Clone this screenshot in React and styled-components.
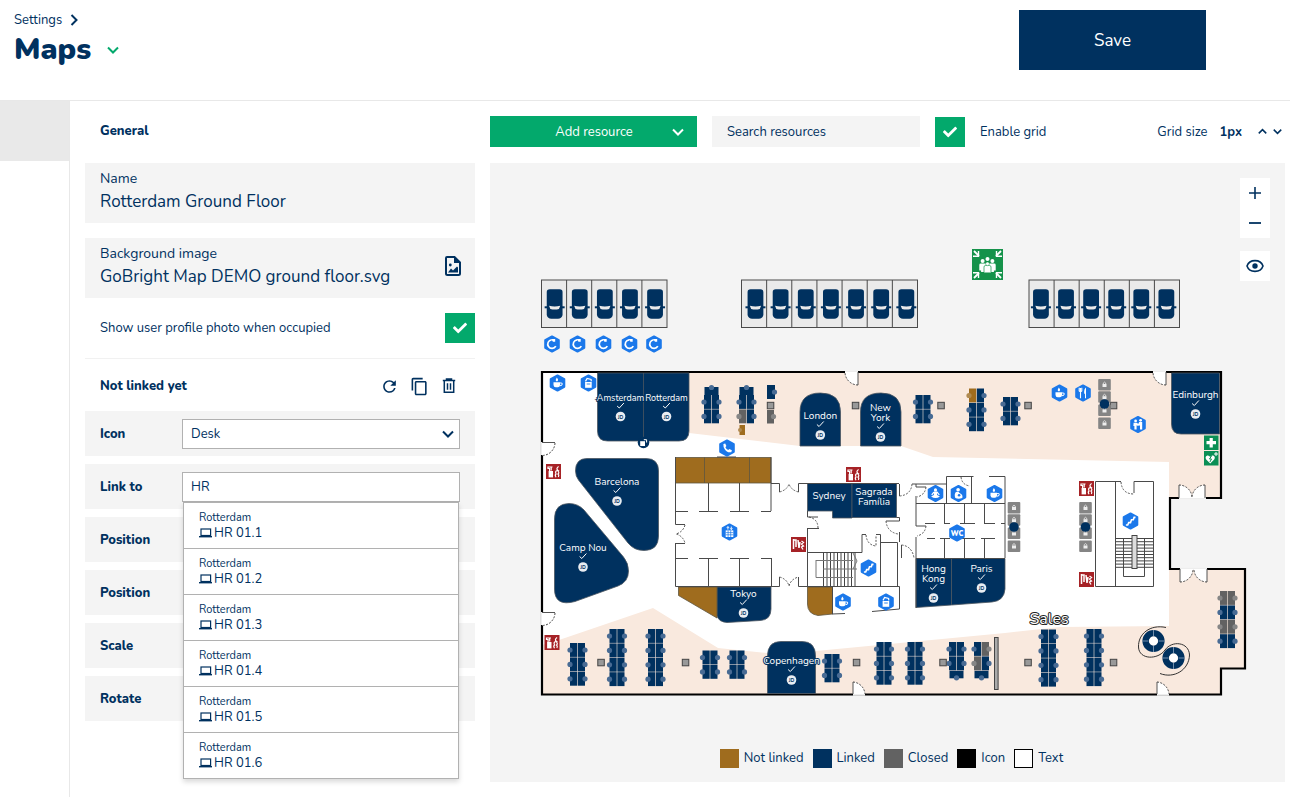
import React from "react";
import styled, { createGlobalStyle } from "styled-components";
import { FaCheck } from "react-icons/fa";
import { MdRefresh, MdContentCopy } from "react-icons/md";

const navy = "#00315f";
const green = "#03a96c";
const brown = "#9f6c1e";
const closed = "#626262";
const panel = "#f4f4f4";
const line = "#e8e8e8";
const blue = "#1b78ea";
const peach = "#f9e9de";

const GlobalStyle = createGlobalStyle`
    *, *::before {
        box-sizing: border-box;
    }

    body {
        margin: 0;
        color: ${navy};
        background: #fff;
        font-family: Nunito, Lato, sans-serif;
        font-size: 13px;
    }

    button, input, select {
        font: inherit;
        color: inherit;
    }
`;

/* ---------- page ---------- */

const Page = styled.div`
    min-height: 100vh;
    display: flex;
    flex-direction: column;
`;

const Header = styled.header`
    display: flex;
    justify-content: space-between;
    align-items: flex-start;
    min-height: 101px;
    padding: 10px 84px 0 14px;
    border-bottom: 1px solid ${line};
`;

const Breadcrumb = styled.a`
    display: flex;
    align-items: center;
    gap: 6px;
    height: 20px;
    color: ${navy};
    text-decoration: none;
`;

const TitleRow = styled.div`
    display: flex;
    align-items: center;
    gap: 16px;
`;

const Title = styled.h1`
    margin: 0;
    font-size: 30px;
    line-height: 40px;
    font-weight: 900;
`;

const PlainButton = styled.button`
    display: grid;
    place-items: center;
    padding: 0;
    border: 0;
    background: none;
    color: ${(props) => props.$color || navy};
    cursor: pointer;
`;

const SaveButton = styled.button`
    width: 187px;
    height: 60px;
    border: 0;
    color: #fff;
    background: ${navy};
    font-size: 17px;
    cursor: pointer;
`;

const Body = styled.div`
    flex: 1;
    display: flex;
`;

const Sidebar = styled.nav`
    flex: 0 0 70px;
    border-right: 1px solid ${line};
`;

const SidebarItem = styled.div`
    height: 60px;
    background: #e9e9e9;
`;

const Content = styled.main`
    flex: 1;
    min-width: 0;
    display: grid;
    grid-template-columns: 390px minmax(0, 1fr);
    gap: 15px;
    align-items: start;
    padding: 15px 5px 15px 15px;
`;

/* ---------- left column ---------- */

const SectionHead = styled.div`
    display: flex;
    align-items: center;
    justify-content: space-between;
    height: 30px;
    padding: 0 16px 0 15px;
`;

const SectionTitle = styled.h2`
    margin: 0;
    font-size: 13px;
    font-weight: 800;
`;

const IconActions = styled.div`
    display: flex;
    align-items: center;
    gap: 10px;

    button {
        width: 20px;
        height: 20px;
    }
`;

const Fields = styled.div`
    display: flex;
    flex-direction: column;
    gap: 15px;
    margin-top: 17px;
    padding-bottom: 15px;
    margin-bottom: 12px;
    border-bottom: 1px solid #f1f1f1;
`;

const Field = styled.div`
    display: flex;
    align-items: center;
    height: 60px;
    padding: 0 13px 4px 15px;
    background: ${panel};
`;

const FieldText = styled.div`
    flex: 1;
    display: flex;
    flex-direction: column;

    label {
        line-height: 20px;
        font-size: 14px;
    }

    input {
        width: 100%;
        height: 24px;
        padding: 0;
        border: 0;
        background: none;
        font-size: 17px;
    }
`;

const CheckRow = styled.div`
    display: flex;
    align-items: center;
    justify-content: space-between;
    padding-left: 15px;
`;

const CheckBoxBox = styled.span`
    display: grid;
    width: 30px;
    height: 30px;
    place-items: center;
    background: ${green};

    input, svg {
        grid-area: 1 / 1;
    }

    input {
        width: 30px;
        height: 30px;
        margin: 0;
        appearance: none;
        cursor: pointer;
    }

    svg {
        color: #fff;
        pointer-events: none;
    }
`;

const Rows = styled.div`
    display: flex;
    flex-direction: column;
    gap: 8px;
    margin-top: 10px;
`;

const Row = styled.div`
    display: flex;
    align-items: center;
    height: 45px;
    padding: 0 15px;
    background: ${panel};
`;

const RowLabel = styled.label`
    flex: 0 0 82px;
    font-weight: 800;
`;

const Control = styled.div`
    position: relative;
    flex: 1;
    display: grid;
    align-items: center;

    > input, > select, > svg {
        grid-area: 1 / 1;
    }

    > input, > select {
        width: 100%;
        height: 30px;
        padding: 0 8px;
        border: 1px solid #b1b1b1;
        border-radius: 0;
        outline: 0;
        appearance: none;
        background: #fff;
    }

    > svg {
        justify-self: end;
        margin-right: 6px;
        pointer-events: none;
    }
`;

const Results = styled.ul`
    position: absolute;
    top: 100%;
    left: 1px;
    right: 1px;
    z-index: 2;
    margin: 0;
    padding: 0;
    list-style: none;
    border: 1px solid #b1b1b1;
    background: #fff;
    box-shadow: 0 3px 5px rgba(0, 0, 0, 0.15);
`;

const Result = styled.li`
    & + & {
        border-top: 1px solid #b1b1b1;
    }

    button {
        display: block;
        width: 100%;
        height: 45px;
        padding: 0 15px;
        border: 0;
        background: none;
        text-align: left;
        cursor: pointer;
    }
`;

const Place = styled.span`
    display: block;
    font-size: 11px;
    line-height: 15px;
`;

const Desk = styled.span`
    display: flex;
    align-items: center;
    gap: 2px;
    line-height: 16px;
`;

/* ---------- right column ---------- */

const Toolbar = styled.div`
    display: flex;
    align-items: center;
    gap: 15px;
    height: 31px;
    margin-bottom: 16px;
`;

const AddButton = styled.button`
    flex: 0 0 207px;
    display: grid;
    grid-template-columns: 1fr 12px;
    align-items: center;
    height: 31px;
    padding: 0 13px 0 26px;
    border: 0;
    color: #fff;
    background: ${green};
    cursor: pointer;
`;

const Search = styled.input`
    flex: 0 0 208px;
    height: 31px;
    padding: 0 15px;
    border: 0;
    background: ${panel};

    &::placeholder {
        color: ${navy};
        opacity: 1;
    }
`;

const GridSize = styled.div`
    display: flex;
    align-items: center;
    gap: 12px;
    margin-left: auto;
    padding-right: 2px;
`;

const Steppers = styled.div`
    display: flex;
    gap: 4px;
    margin-left: 3px;

    button {
        width: 11px;
        height: 16px;
    }
`;

const MapArea = styled.section`
    position: relative;
    padding-bottom: 14px;
    background: ${panel};
`;

const Plan = styled.svg`
    display: block;
    width: 100%;
    height: auto;
    font-family: Nunito, Lato, sans-serif;
`;

const MapControls = styled.div`
    position: absolute;
    top: 15px;
    right: 15px;
    display: flex;
    flex-direction: column;
    gap: 13px;
`;

const ControlGroup = styled.div`
    display: flex;
    flex-direction: column;
    background: #fff;

    button {
        width: 30px;
        height: 30px;
    }
`;

const Legend = styled.ul`
    display: flex;
    justify-content: center;
    gap: 9px;
    margin: 0;
    padding: 0 0 0 8px;
    list-style: none;
`;

const LegendItem = styled.li`
    display: flex;
    align-items: center;
    gap: 5px;
    line-height: 20px;

    &::before {
        content: "";
        width: 19px;
        height: 19px;
        background: ${(props) => props.$color};
        border: 1px solid ${(props) => props.$border || props.$color};
    }
`;

/* ---------- small icons ---------- */

const Chevron = ({ dir = "down", size = 12, width = 2 }) => {
    const d = {
        down: "M1 3.5 L6 8.5 L11 3.5",
        up: "M1 8.5 L6 3.5 L11 8.5",
        right: "M3.5 1 L8.5 6 L3.5 11",
    }[dir];
    return (
        <svg width={size} height={size} viewBox="0 0 12 12" fill="none" stroke="currentColor" strokeWidth={width}>
            <path d={d} />
        </svg>
    );
};

const TrashIcon = () => (
    <svg width="14" height="16" viewBox="0 0 14 16" fill="none" stroke={navy} strokeWidth="1.5">
        <path d="M0.8 2.6 H13.2 M4.5 2 V1 H9.5 V2 M2.3 3 V14.2 H11.7 V3 M5.5 5.2 V11.8 M8.5 5.2 V11.8" />
    </svg>
);

const FileImageIcon = () => (
    <svg width="18" height="20" viewBox="0 0 18 20">
        <path d="M3 1 H10.5 L16 6.5 V17.5 Q16 19 14.5 19 H3.5 Q2 19 2 17.5 V2 Q2 1 3 1 Z" fill="none" stroke={navy} strokeWidth="2" />
        <path d="M10 1 V7 H16 Z" fill={navy} />
        <path d="M4 16.5 L7 12.5 L9 14.5 L13 10.5 L14 11.5 V16.5 Z" fill={navy} />
        <circle cx="6.3" cy="9" r="1.4" fill={navy} />
    </svg>
);

const LaptopIcon = () => (
    <svg width="13" height="10" viewBox="0 0 13 10">
        <rect x="2" y="1" width="9.6" height="6.5" fill="none" stroke={navy} strokeWidth="1.2" />
        <rect x="0" y="8" width="13" height="1.4" fill={navy} />
    </svg>
);

const EyeIcon = () => (
    <svg width="18" height="14" viewBox="0 0 18 14">
        <path d="M1 7 C3.5 -0.2 14.5 -0.2 17 7 C14.5 14.2 3.5 14.2 1 7 Z" fill="none" stroke={navy} strokeWidth="1.6" />
        <circle cx="9" cy="7" r="2.7" fill={navy} />
    </svg>
);

/* ---------- floor plan parts ---------- */

const Stalls = ({ x, width, count, shift = 0.6 }) => {
    const step = width / count;
    return (
        <g>
            <rect x={x} y="280" width={width} height="47.5" fill="#eaeaea" stroke="#4a4a4a" />
            {[...Array(count)].map((_, i) => {
                const cx = x + i * step + step / 2 + shift;
                return (
                    <g key={i}>
                        {i > 0 && <path d={`M${x + i * step} 280 V327.5`} stroke="#4a4a4a" />}
                        <path
                            d={`M${cx - 7.9} 292 q0 -2.8 3 -2.8 h9.8 q3 0 3 2.8 v23 q-1 3.8 -4.5 3.8 h-6.8 q-3.5 0 -4.5 -3.8 Z`}
                            fill={navy}
                        />
                        <path d={`M${cx - 10} 307.3 H${cx + 10}`} stroke={navy} strokeWidth="2" />
                        <path d={`M${cx - 5.6} 305.8 q5.6 1.4 11.2 0 l-1.3 3.2 q-4.3 1 -8.6 0 Z`} fill="#eaeaea" />
                    </g>
                );
            })}
        </g>
    );
};

// rows: one [left, right] colour pair per desk row
const Desks = ({ x, y, rows, top, bottom }) => (
    <g>
        {top && (
            <g>
                <rect x={x + 0.5} y={y - 8} width="14" height="8" fill={navy} />
                <circle cx={x + 7.5} cy={y - 7.5} r="2.6" fill="#486b94" />
            </g>
        )}
        {rows.map(([left, right], i) => {
            const ty = y + i * 14.4;
            return (
                <g key={i}>
                    <rect x={x} y={ty} width="7.2" height="13.9" fill={left} />
                    <rect x={x + 7.8} y={ty} width="7.2" height="13.9" fill={right} />
                    <circle cx={x} cy={ty + 7} r="2.6" fill={left === navy ? "#486b94" : left === brown ? "#b08a50" : "#868686"} />
                    <circle cx={x + 15} cy={ty + 7} r="2.6" fill={right === navy ? "#486b94" : "#868686"} />
                </g>
            );
        })}
        {bottom && (
            <g>
                <rect x={x + 0.5} y={y + rows.length * 14.4} width="14" height="7.5" fill={navy} />
                <circle cx={x + 7.5} cy={y + rows.length * 14.4 + 7} r="2.6" fill="#486b94" />
            </g>
        )}
    </g>
);

const Pillar = ({ x, y }) => (
    <rect x={x - 3.2} y={y - 3.2} width="6.5" height="6.5" fill="#999" stroke="#444" />
);

const Lockers = ({ x, y }) => (
    <g>
        {[0, 12.2, 25.5, 38.5].map((dy) => (
            <g key={dy}>
                <rect x={x - 6.3} y={y + dy} width="12.6" height="11.6" rx="1" fill="#858585" />
                <rect x={x - 2} y={y + dy + 5} width="4" height="3" fill="#eee" />
                <path d={`M${x - 1.2} ${y + dy + 5} v-1 q1.2 -1.8 2.4 0 v1`} fill="none" stroke="#eee" strokeWidth="0.8" />
            </g>
        ))}
        <circle cx={x} cy={y + 25} r="4.8" fill={navy} />
    </g>
);

const glyphs = {
    coffee: (
        <g>
            <path d="M-4 -0.8 H2.6 V2 Q2.2 4.2 0.4 4.2 H-1.8 Q-3.8 4.2 -4 2 Z" fill="#fff" />
            <path d="M2.6 0 Q5 -0.4 4.6 1.4 Q4.2 2.8 2.4 2.8" fill="none" stroke="#fff" strokeWidth="1.1" />
            <path d="M-0.7 -5.4 Q1.2 -3.6 0.4 -2.2 Q-0.7 -1.2 -1.7 -2.2 Q-2.2 -3.2 -0.7 -5.4 Z" fill="#fff" />
        </g>
    ),
    printer: (
        <g>
            <path d="M-3.4 -1 H3.2 V4.8 H-3.4 Z" fill="#fff" />
            <path d="M-3 -1.6 L-1.4 -4.6 L2.6 -3.6 L2.8 -1.6" fill="none" stroke="#fff" strokeWidth="1.2" />
            <path d="M-1.8 1 H1.8" stroke={blue} strokeWidth="0.9" />
        </g>
    ),
    phone: <path d="M-3.6 -4 l1.8 -0.6 l1.2 2.6 l-1 1.2 q1 2 2.8 2.8 l1.2 -1 l2.5 1.2 l-0.6 2 q-4.4 0.8 -6.6 -3 q-1.6 -2.6 -1.3 -5.2 Z" fill="#fff" />,
    lift: (
        <g>
            <rect x="-3.8" y="-1.6" width="7.6" height="6.6" fill="#fff" />
            <path d="M-3.8 0.6 H3.8 M-3.8 2.8 H3.8 M-1.4 -1.6 V5 M1.2 -1.6 V5" stroke={blue} strokeWidth="0.7" />
            <path d="M-1.6 -2.4 v-3 m-1.1 1.3 l1.1 -1.3 l1.1 1.3 M1.8 -5.4 v3 m-1.1 -1.3 l1.1 1.3 l1.1 -1.3" fill="none" stroke="#fff" strokeWidth="0.9" />
        </g>
    ),
    food: (
        <g>
            <path d="M-3.8 -5.2 v3 q1.3 1.6 2.6 0 v-3 M-2.5 -5 v10.2" fill="none" stroke="#fff" strokeWidth="1.1" />
            <path d="M3 5.2 V-5.4 Q0.8 -4 1.2 0.8 H2 V5.2 Z" fill="#fff" />
        </g>
    ),
    meeting: (
        <g fill="#fff">
            <circle cx="-2.4" cy="-3.6" r="1.4" />
            <circle cx="2.6" cy="-4.2" r="1.4" />
            <path d="M-4.4 -1.8 H-1.2 L0.2 -0.4 L1.2 -2.4 H4.2 V5 H2 V1 L-0.6 1.2 L-1.4 0.8 V5 H-3.6 V1.4 H-4.6 Z" />
        </g>
    ),
    yoga: (
        <g>
            <circle cy="-3.6" r="1.6" fill="#fff" />
            <path d="M-1.6 -1.4 H1.6 L3.8 1.4 M-1.6 -1.4 L-3.8 1.4" fill="none" stroke="#fff" strokeWidth="1.2" />
            <path d="M-1.6 -1.6 H1.6 V1.6 L4.4 3 Q0 6 -4.4 3 L-1.6 1.6 Z" fill="#fff" />
        </g>
    ),
    baby: (
        <g>
            <circle cx="-0.4" cy="-3.8" r="1.8" fill="#fff" />
            <path d="M-2.6 -1.4 Q0 -2.6 1 -0.6 Q4.8 1 3.8 4.6 Q0 6 -3.2 4.6 Q-4.6 1 -2.6 -1.4 Z" fill="#fff" />
            <circle cx="0.6" cy="1.8" r="1.3" fill={blue} />
        </g>
    ),
    stairs: <path d="M-4.6 4 h1.8 l1 -2.4 h1.8 l1 -2.8 h1.8 l0.8 -2.4 h1.4" fill="none" stroke="#fff" strokeWidth="1.6" />,
    charge: (
        <g>
            <path d="M-0.4 -4.2 A4.3 4.3 0 1 0 3.8 2.2" fill="none" stroke="#fff" strokeWidth="1.7" />
            <path d="M-1 -5 H3.2 V-2.2 H1 Z" fill="#fff" />
        </g>
    ),
    wc: <text y="3" textAnchor="middle" fontSize="7" fontWeight="900" fill="#fff">WC</text>,
};

const Hex = ({ x, y, icon }) => (
    <g transform={`translate(${x} ${y})`}>
        <path d="M0 -7.6 L6.8 -3.8 V3.8 L0 7.6 L-6.8 3.8 V-3.8 Z" fill={blue} stroke={blue} strokeWidth="2" strokeLinejoin="round" />
        {glyphs[icon]}
    </g>
);

const FireSign = ({ x, y, hose }) => (
    <g transform={`translate(${x} ${y})`}>
        <rect width="15" height="15" fill="#a62226" />
        {hose ? (
            <g>
                <path d="M2.5 2 V12 M2.5 3 H5 V10 M7 3 L8 11 L9 5" fill="none" stroke="#fff" strokeWidth="1.5" />
                <path d="M10.5 4 l2 1.5 l-2 1.5 l2 2 l-2 1 l1.5 2.5" fill="none" stroke="#fff" strokeWidth="1.3" />
            </g>
        ) : (
            <g>
                <rect x="2.6" y="7" width="4.4" height="6.4" fill="#fff" />
                <path d="M3.6 7 V4.5 H2 V3 H6.5 M5.2 3 V6.5" fill="none" stroke="#fff" strokeWidth="1.2" />
                <path d="M12.6 2.5 q-3 2 -0.6 4 q-3.4 0 -2 3.5 q-1.4 1 0 3.2 M12 7 q1.6 2 0 3 q1.4 1 0.4 3" fill="none" stroke="#fff" strokeWidth="1.2" />
            </g>
        )}
    </g>
);

const AssemblySign = () => (
    <g>
        <rect x="972" y="249" width="31" height="31" fill="#15924a" />
        <path
            d="M974 251 l5 5 M1001 251 l-5 5 M974 278 l5 -5 M1001 278 l-5 -5"
            stroke="#fff" strokeWidth="1.8"
        />
        <path
            d="M978.5 251 v5.3 h-5.5 M996.5 251 v5.3 h5.5 M978.5 278 v-5.3 h-5.5 M996.5 278 v-5.3 h5.5"
            fill="none" stroke="#fff" strokeWidth="1.4"
        />
        <g fill="#fff">
            <circle cx="982.6" cy="261" r="2" />
            <circle cx="992.4" cy="261" r="2" />
            <circle cx="987.5" cy="259" r="2" />
            <path d="M979.3 265 q0 -1.4 1.4 -1.4 h13.6 q1.4 0 1.4 1.4 v5.4 h-1.8 v1.5 h-12.8 v-1.5 h-1.8 Z" />
        </g>
        <path d="M984 272.5 v-5.5 q0 -1.5 1.5 -1.5 h4 q1.5 0 1.5 1.5 v5.5" fill="#fff" stroke="#15924a" strokeWidth="0.7" />
        <circle cx="987.5" cy="263.8" r="1.9" fill="#fff" stroke="#15924a" strokeWidth="0.5" />
    </g>
);

const Room = ({ x, y, lines, size = 10, plain }) => {
    const end = y + (lines.length - 1) * 10;
    return (
        <g>
            <text y={y + 3.5} fontSize={size} fill="#fff" stroke={navy} strokeWidth="2" paintOrder="stroke" textAnchor="middle">
                {lines.map((text, i) => <tspan key={text} x={x} dy={i ? 10 : 0}>{text}</tspan>)}
            </text>
            {!plain && (
                <g>
                    <path d={`M${x - 3.4} ${end + 9} l2.2 2 l4.6 -5`} fill="none" stroke="#fff" />
                    <circle cx={x} cy={end + 19.5} r="4.8" fill="#e9edf2" />
                    <text x={x} y={end + 21.5} fontSize="5" fontWeight="700" textAnchor="middle" fill={navy}>JD</text>
                </g>
            )}
        </g>
    );
};

// quarter circle door, the leaf stands on (x, y) and swings over to (x + w, y + h)
const Door = ({ x, y, w, h }) => (
    <g>
        <path d={`M${x} ${y} V${y + h} A13 13 0 0 ${w * h > 0 ? 0 : 1} ${x + w} ${y} Z`} fill="#fff" />
        <path d={`M${x} ${y} V${y + h}`} stroke="#555" />
        <path
            d={`M${x} ${y + h} A13 13 0 0 ${w * h > 0 ? 0 : 1} ${x + w} ${y}`}
            fill="none" stroke="#444" strokeDasharray="2 1.4"
        />
    </g>
);

const n = [navy, navy];
const grey = [closed, closed];

const deskGroups = [
    { x: 704, y: 395, rows: [n, n], top: true },
    { x: 739, y: 395, rows: [n, [closed, navy]], top: true },
    { x: 915.5, y: 395, rows: [n, n] },
    { x: 969, y: 388.5, rows: [[brown, navy], n, n] },
    { x: 1003, y: 397, rows: [n, n] },
    { x: 570, y: 643, rows: [n, n, n] },
    { x: 609.5, y: 629, rows: [n, n, n, n] },
    { x: 648, y: 629, rows: [n, n, n, n] },
    { x: 702.5, y: 650.5, rows: [n, n] },
    { x: 729.5, y: 650.5, rows: [n, n] },
    { x: 824.5, y: 654, rows: [n, n] },
    { x: 876.5, y: 642, rows: [n, n, n] },
    { x: 907.5, y: 642, rows: [n, n, n] },
    { x: 949, y: 642, rows: [n, n], bottom: true },
    { x: 974, y: 642, rows: [[navy, closed], [closed, navy]], bottom: true },
    { x: 1041, y: 629.5, rows: [n, n, n, n] },
    { x: 1086.5, y: 629, rows: [n, n, n, n] },
    { x: 1220, y: 591, rows: [grey, n, grey, n] },
];

const pillars = [
    [770.5, 405.5], [855.5, 405.5], [941, 405.5], [1028, 405.5], [1113.5, 405.5],
    [601, 662.5], [685.5, 662.5], [856.5, 662.5], [943, 662.5], [1028, 662.5], [1113.5, 662.5],
];

const hexes = [
    [552, 344, "charge"], [577.5, 344, "charge"], [603.5, 344, "charge"], [629.5, 344, "charge"], [654, 344, "charge"],
    [557.5, 383, "coffee"], [588.5, 383, "printer"], [727, 448, "phone"], [729.5, 532, "lift"],
    [1059.5, 393, "coffee"], [1083, 393, "food"], [1138, 424.5, "meeting"],
    [935.5, 493.5, "yoga"], [958.5, 493.5, "baby"], [994.5, 493.5, "coffee"], [957, 533, "wc"],
    [868.5, 568, "stairs"], [843, 602, "coffee"], [886, 602, "printer"], [1130.5, 521, "stairs"],
];

const rooms = [
    [617, 481.5, ["Barcelona"]],
    [583, 547.5, ["Camp Nou"]],
    [820.3, 415.5, ["London"]],
    [880.5, 407.5, ["New", "York"]],
    [1195.5, 394.5, ["Edinburgh"]],
    [743.5, 593.5, ["Tokyo"]],
    [791.5, 660.5, ["Copenhagen"]],
    [933.5, 568.5, ["Hong", "Kong"]],
    [981.5, 568.5, ["Paris"]],
];

const stairSteps = (x1, x2, y1, y2, step) => {
    let d = "";
    for (let y = y1; y <= y2; y += step) {
        d += `M${x1} ${y} H${x2} `;
    }
    return d;
};

const FloorPlan = () => (
    <Plan viewBox="490 163 795 585" role="img" aria-label="Rotterdam Ground Floor">
        <Stalls x={541.5} width={125.5} count={5} />
        <Stalls x={741.5} width={176} count={7} shift={1.4} />
        <Stalls x={1029} width={150.5} count={6} shift={-0.6} />
        <AssemblySign />

        <path d="M542 372 H1221 V498 H1170 V569 H1245 V668.5 H1221 V694.5 H542 Z" fill="#fff" />
        <path d="M689 372 H1221 V498 H1169 V462 L933 457 L901 446 H800 L689 433 Z" fill={peach} />
        <path d="M542 645 L559 640 L653 608 L718 648 L767 653 L816 651 L1005 633 L1060 627 L1169 626 V569 H1245 V668.5 H1221 V694.5 H542 Z" fill={peach} />
        <path d="M542 372 H1221 V498 H1170 V569 H1245 V668.5 H1221 V694.5 H542 Z" fill="none" stroke="#000" strokeWidth="2.2" />

        {/* openings in the outer wall */}
        <path d="M845 372 H858 M1153 372 H1166 M542 442 V455 M542 612 V625 M853 694.5 H865 M1157 694.5 H1169 M1179 498 H1206 M1180 569 H1207" stroke="#ededed" strokeWidth="2.4" />
        <Door x={858} y={372} w={-13} h={13} />
        <Door x={1166} y={372} w={-13} h={13} />
        <path d="M542 442.5 H555 A13 13 0 0 1 542 455.5 M542 612.5 H555 A13 13 0 0 1 542 625.5" fill="#fff" stroke="#444" strokeDasharray="2 1.4" />
        <path d="M542 442.5 H555 M542 612.5 H555" stroke="#555" />
        <Door x={853} y={694} w={12} h={-12} />
        <Door x={1157} y={694} w={12} h={-12} />
        <Door x={1179} y={498} w={13} h={-13} />
        <Door x={1205} y={498} w={-13} h={-13} />
        <Door x={1180} y={569} w={13} h={13} />
        <Door x={1207} y={569} w={-13} h={13} />

        {/* rooms */}
        <g fill={navy} stroke="#4b5560" strokeWidth="0.8">
            <path d="M597.5 373 H689 V431 Q689 441 679 441 H607.5 Q597.5 441 597.5 431 Z" />
            <path d="M643.5 373 V437" />
            <path d="M587 458.5 H646 Q658.5 458.5 658.5 471 V536 Q658.5 550.5 644 550.5 Q634 550.5 628 543 L578.5 480 Q575.5 476 575.5 471 Q575.5 458.5 587 458.5 Z" />
            <path d="M569 503.5 Q578 503.5 584 510 L623.5 557 Q628.5 563 628.5 571 Q628.5 582 618 586 L575 601.5 Q554.5 607 554.5 589 V519 Q554.5 503.5 569 503.5 Z" />
            <path d="M800 446 V412 Q800 393 820.5 393 Q840.5 393 840.5 412 V446 Z" />
            <path d="M860.5 446 V412 Q860.5 393 881 393 Q901 393 901 412 V446 Z" />
            <path d="M1171.5 373 H1219.5 V434 H1181 Q1171.5 434 1171.5 424 Z" />
            <path d="M807.5 483.5 H852 V518 H832.5 V511 H807.5 Z" />
            <path d="M852 483.5 H896.5 V517.5 H852 Z" />
            <path d="M717 587 H771 V609 Q771 620 760 620.5 L727 622.5 Q719 622 717 616 Z" />
            <path d="M767.5 693.5 V656 Q767.5 641.5 781 641.5 H802 Q815.5 641.5 815.5 656 V693.5 Z" />
            <path d="M916 558.5 H951.5 V605 L916 607.5 Z" />
            <path d="M951.5 558.5 H1005 V589 Q1004 601 992 602 L951.5 605 Z" />
        </g>
        <g fill={brown} stroke="#5e5540" strokeWidth="0.8">
            <path d="M675.5 457.5 H771 V483 H675.5 Z M704.5 457.5 V483 M749.5 457.5 V483" />
            <path d="M678.5 587 H717 V618 L678.5 595.5 Z" />
            <path d="M807.5 587 H832.5 V614 L818 615.5 Q807.5 614 807.5 604 Z" />
        </g>

        {/* inner walls */}
        <g fill="none" stroke="#4a4a4a">
            <path d="M675.5 457 V524.5 H685 M675.5 543.5 H685 M675.5 543 V586.5 H779.5 M717 457 H736" />
            <path d="M771 457 V511 M708.5 483 V511 M739.5 483 V511 M675 511.5 H688 M699 511.5 H718 M730 511.5 H749 M761 511.5 H771" />
            <path d="M708.5 558 V586 M739.5 558 V586 M771.5 558 V586 M675 558.5 H688 M699 558.5 H718 M730 558.5 H749 M761 558.5 H771" />
            <path d="M771 483.5 H779.5 V492 M798.5 492 V483.5 H899 M779.5 586.5 V577 M798.5 577 V586.5 H899.5 V609 L872 611.5 M845 613.5 L832 614" />
            <path d="M807.5 511 V517 H818 M807.5 528.5 H819 M807.5 528 V586 M807.5 552.5 H862 V534.5 H866 M876 534.5 H880.5 V586 M880.5 542.5 H897.5 V586 M899.5 484 V496 M896.5 517.5 H899.5 V521 H886 M899.5 532 V542 M832.5 587 V614 M901.5 545 V558" />
            <path d="M912 484 H946.5 M916 484 V487 H926 M916 496 V526 H926 M916 537 V608 M946.5 503 V476.5 H973.5 M971.5 476 V503 M989 476.5 H1005 V558 M916 503.5 H1005 M944.5 503 V523 M964.5 503 V523 M984.5 503 V523" />
            <path d="M925 523.5 H935 M944 523.5 H950 M960 523.5 H975 M984 523.5 H995 M1001 523.5 H1005 M927 538.5 H935 M940 538.5 H950 M962 538.5 H975 M981 538.5 H995 M944.5 538 V558 M964.5 538 V558 M984.5 538 V558 M916 558.5 H1005" />
            <path d="M1095.5 586.5 V481.5 H1121 M1134 493 V481.5 H1153.5 V586.5 H1095.5 M1115.5 481.5 V586.5 M1115.5 538.5 H1153.5 M1123.5 538 V576.5 H1144.5 V538" />
        </g>
        {/* inner doors */}
        <g fill="none" stroke="#555" strokeDasharray="2 1.4">
            <path d="M779.5 492 Q787 490 789 484 Q791 490 798.5 492 M779.5 577 Q787 579 789 586 Q791 579 798.5 577" />
            <path d="M685 525 Q683 532 676 534 Q683 536 685 543 M899.5 496 Q911 495 912 484 M926 487 Q925 495 917 497 M926 526 Q925 534 917 536" />
            <path d="M818 528 Q818 519 809 517 M886 521 Q887 532 898 534 M866 535 Q867 545 876 546 V535 M901.5 545 Q912 546 914 558" />
            <path d="M961 477 Q962 485 970 486 M1121 482 Q1122 494 1134 494" />
        </g>

        {/* stairs */}
        <g fill="none" stroke="#444">
            <path d="M823.5 552 V586 M827 552 V586 M830.5 552 V586 M834 552 V586 M837.5 552 V586 M841 552 V586 M844.5 552 V586 M848 552 V586 M851.5 552 V586 M855 552 V586" />
            <path d="M823 569 H857 M853 553 L857 561 L853 569 M816 560.5 H853 M816 560 V577.5 H853" stroke="#777" />
            <path d={stairSteps(1115.5, 1132, 538.5, 568, 3.2)} />
            <path d={stairSteps(1137, 1153.5, 538.5, 568, 3.2)} />
            <rect x="1132" y="535.5" width="5" height="33" fill="#ddd" />
        </g>

        {deskGroups.map((group) => <Desks key={`${group.x}-${group.y}`} {...group} />)}
        <rect x="767" y="385" width="8" height="14" fill={navy} />
        <circle cx="774.5" cy="392" r="2.6" fill="#486b94" />
        <rect x="767" y="410" width="7" height="13.5" fill={closed} />
        <circle cx="773.5" cy="416.5" r="2.6" fill="#868686" />
        <rect x="739.5" y="425" width="5.5" height="10" fill={brown} />
        <circle cx="740" cy="430" r="2" fill="#b08a50" />
        {pillars.map(([x, y]) => <Pillar key={`${x}-${y}`} x={x} y={y} />)}
        <rect x="994.5" y="637.5" width="3.6" height="52" fill="#aaa" stroke="#444" />

        <Lockers x={1104.5} y={379} />
        <Lockers x={1014} y={502} />
        <Lockers x={1085.5} y={502} />

        {/* lounge pods */}
        <path
            d="M1166 627.5 C1150 624 1138 634 1138.5 647 C1139 660 1158 660 1165 650 C1172 640 1189 642 1189.5 655 C1189 670 1174 679 1160 673.5"
            fill="none" stroke="#333"
        />
        {[[1153.5, 641], [1173.5, 658]].map(([x, y]) => (
            <g key={x}>
                <circle cx={x} cy={y} r="7.8" fill="none" stroke={navy} strokeWidth="6.6" />
                <path d={`M${x - 11} ${y} h6 m10 0 h6 M${x} ${y - 11} v6 m0 10 v6`} stroke="#8ea6c0" strokeWidth="0.8" />
                <circle cx={x} cy={y} r="4.4" fill="#fff" />
            </g>
        ))}

        <circle cx="643.5" cy="442.5" r="5.8" fill={navy} />
        <rect x="640.2" y="441.2" width="4.8" height="4.8" fill="#fff" />
        <path d="M643.8 439.7 h2.8 v2.8" fill="none" stroke="#fff" />

        <FireSign x={546} y={464} />
        <FireSign x={846} y={467} />
        <FireSign x={791} y={537} hose />
        <FireSign x={544.5} y={635} />
        <FireSign x={1079} y={481} />
        <FireSign x={1079} y={572} hose />

        <rect x="1204" y="435.5" width="14.5" height="14.5" fill="#0a8f55" />
        <path d="M1206.5 442.7 H1216 M1211.2 438 V447.5" stroke="#fff" strokeWidth="3.2" />
        <rect x="1204" y="451" width="14.5" height="14.5" fill="#0a8f55" />
        <path d="M1210.2 463.5 l-4 -4 q-1.6 -3 1 -4 q2 -0.4 3 1.6 q1 -2 3 -1.6 q2.6 1 1 4 Z" fill="#fff" />
        <path d="M1211.5 456 l-2 3 h2 l-1.6 3" fill="none" stroke="#0a8f55" />
        <path d="M1214 454 h4 M1216 452 v4" stroke="#fff" />

        {hexes.map(([x, y, icon]) => <Hex key={`${x}-${y}`} x={x} y={y} icon={icon} />)}
        <Room x={620.5} y={397} lines={["Amsterdam"]} size={9} />
        <Room x={666.5} y={397} lines={["Rotterdam"]} size={9} />
        {rooms.map(([x, y, lines]) => <Room key={lines[0]} x={x} y={y} lines={lines} />)}
        <Room x={829} y={495.5} lines={["Sydney"]} plain />
        <Room x={874} y={491.5} lines={["Sagrada", "Família"]} plain />
        <text x="1049" y="624" fontSize="16" textAnchor="middle" fill="#fff" stroke="#222" strokeWidth="2" paintOrder="stroke">Sales</text>
    </Plan>
);

/* ---------- app ---------- */

const CheckBox = ({ id }) => (
    <CheckBoxBox>
        <input id={id} type="checkbox" defaultChecked />
        <FaCheck size={14} />
    </CheckBoxBox>
);

const results = ["HR 01.1", "HR 01.2", "HR 01.3", "HR 01.4", "HR 01.5", "HR 01.6"];
const moreRows = ["Position", "Position", "Scale", "Rotate"];

const Settings = () => (
    <section>
        <SectionHead>
            <SectionTitle>General</SectionTitle>
        </SectionHead>
        <Fields>
            <Field>
                <FieldText>
                    <label htmlFor="name">Name</label>
                    <input id="name" defaultValue="Rotterdam Ground Floor" />
                </FieldText>
            </Field>
            <Field>
                <FieldText>
                    <label htmlFor="background">Background image</label>
                    <input id="background" readOnly value="GoBright Map DEMO ground floor.svg" />
                </FieldText>
                <PlainButton aria-label="Choose image"><FileImageIcon /></PlainButton>
            </Field>
            <CheckRow>
                <label htmlFor="photo">Show user profile photo when occupied</label>
                <CheckBox id="photo" />
            </CheckRow>
        </Fields>

        <SectionHead>
            <SectionTitle>Not linked yet</SectionTitle>
            <IconActions>
                <PlainButton aria-label="Reset"><MdRefresh size={19} /></PlainButton>
                <PlainButton aria-label="Copy"><MdContentCopy size={19} /></PlainButton>
                <PlainButton aria-label="Delete"><TrashIcon /></PlainButton>
            </IconActions>
        </SectionHead>
        <Rows>
            <Row>
                <RowLabel htmlFor="icon">Icon</RowLabel>
                <Control>
                    <select id="icon" defaultValue="Desk">
                        <option>Desk</option>
                    </select>
                    <Chevron />
                </Control>
            </Row>
            <Row>
                <RowLabel htmlFor="link">Link to</RowLabel>
                <Control>
                    <input id="link" defaultValue="HR" />
                    <Results>
                        {results.map((name) => (
                            <Result key={name}>
                                <button type="button">
                                    <Place>Rotterdam</Place>
                                    <Desk><LaptopIcon />{name}</Desk>
                                </button>
                            </Result>
                        ))}
                    </Results>
                </Control>
            </Row>
            {moreRows.map((name, i) => (
                <Row key={i}>
                    <RowLabel as="span">{name}</RowLabel>
                </Row>
            ))}
        </Rows>
    </section>
);

const MapEditor = () => (
    <section>
        <Toolbar>
            <AddButton>
                <span>Add resource</span>
                <Chevron />
            </AddButton>
            <Search type="text" aria-label="Search resources" placeholder="Search resources" />
            <CheckBox id="grid" />
            <label htmlFor="grid">Enable grid</label>
            <GridSize>
                <span>Grid size</span>
                <strong>1px</strong>
                <Steppers>
                    <PlainButton aria-label="Increase"><Chevron dir="up" size={9} /></PlainButton>
                    <PlainButton aria-label="Decrease"><Chevron size={9} /></PlainButton>
                </Steppers>
            </GridSize>
        </Toolbar>
        <MapArea>
            <FloorPlan />
            <MapControls>
                <ControlGroup>
                    <PlainButton aria-label="Zoom in">
                        <svg width="12" height="12"><path d="M0 6 H12 M6 0 V12" stroke={navy} strokeWidth="1.6" /></svg>
                    </PlainButton>
                    <PlainButton aria-label="Zoom out">
                        <svg width="12" height="12"><path d="M0 6 H12" stroke={navy} strokeWidth="1.8" /></svg>
                    </PlainButton>
                </ControlGroup>
                <ControlGroup>
                    <PlainButton aria-label="Preview"><EyeIcon /></PlainButton>
                </ControlGroup>
            </MapControls>
            <Legend>
                <LegendItem $color={brown}>Not linked</LegendItem>
                <LegendItem $color={navy}>Linked</LegendItem>
                <LegendItem $color={closed}>Closed</LegendItem>
                <LegendItem $color="#000">Icon</LegendItem>
                <LegendItem $color="#fff" $border="#000">Text</LegendItem>
            </Legend>
        </MapArea>
    </section>
);

const App = () => (
    <Page>
        <GlobalStyle />
        <Header>
            <div>
                <Breadcrumb href="#settings">Settings <Chevron dir="right" /></Breadcrumb>
                <TitleRow>
                    <Title>Maps</Title>
                    <PlainButton aria-label="Switch page" $color={green}><Chevron /></PlainButton>
                </TitleRow>
            </div>
            <SaveButton>Save</SaveButton>
        </Header>
        <Body>
            <Sidebar>
                <SidebarItem />
            </Sidebar>
            <Content>
                <Settings />
                <MapEditor />
            </Content>
        </Body>
    </Page>
);

export default App;
